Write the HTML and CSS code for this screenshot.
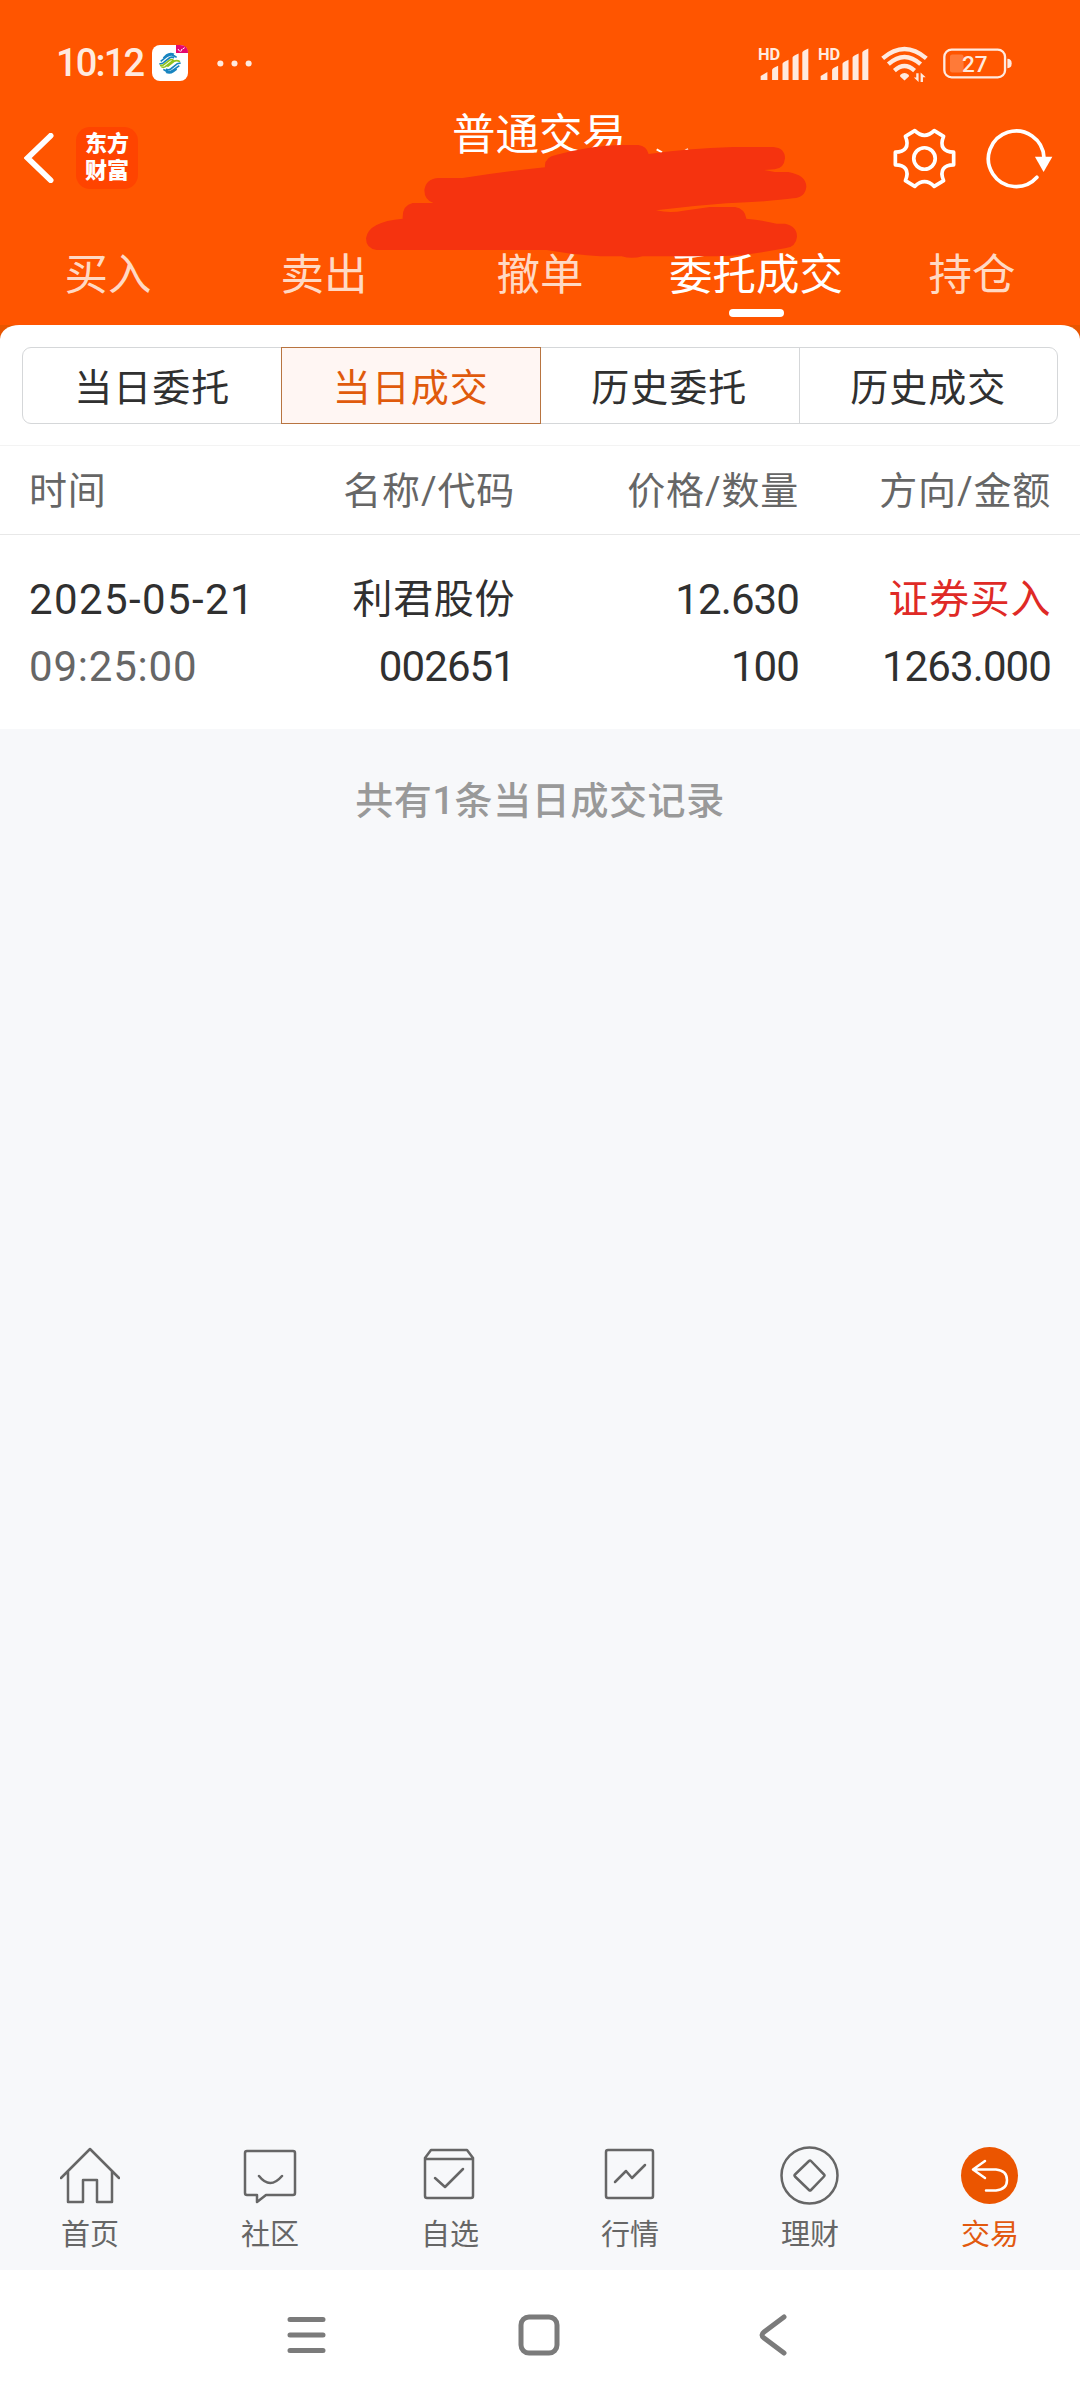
FILE: index.html
```html
<!DOCTYPE html>
<html lang="zh-CN">
<head>
    <meta charset="UTF-8">
    <meta name="viewport" content="width=device-width, initial-scale=1.0">
    <title>普通交易 - 当日成交</title>
    <link rel="stylesheet" href="styles.css">
</head>
<body>
    <header class="header">
        <div class="status-bar">
            <span class="clock">10:12</span>
            <svg class="carrier" viewBox="0 0 108 108">
                <rect width="108" height="108" rx="24" fill="#fff"/>
                <path d="M72 0h12q24 0 24 24H72z" fill="#e5086f"/>
                <path d="M78 12l5 7M86 20l4-8M92 12l6-4" stroke="#fff" stroke-width="3"/>
                <g fill="none" stroke-width="5">
                    <path d="M34 39l10-9q10-8 22-2M26 49l18-14q12-9 22-3l8 5M22 57l10-2 20-16q8-5 14 0" stroke="#1784c0"/>
                    <path d="M24 62l10-2 18-14q6-5 12 0l-24 19q-6 4-12 0M46 65l20-16q8-5 18 1" stroke="#8fc31f"/>
                    <path d="M74 72l-10 8q-10 7-22 2M82 62L64 75q-12 9-22 3l-8-5M86 54l-10 2-20 16q-8 5-14 0" stroke="#1784c0"/>
                </g>
            </svg>
            <svg class="dots" viewBox="0 0 104 20">
                <circle cx="10" cy="10" r="9"/><circle cx="52" cy="10" r="9"/><circle cx="94" cy="10" r="9"/>
            </svg>
            <div class="status-icons">
                <svg class="signal" viewBox="0 0 152 110">
                    <text x="0" y="44">HD</text>
                    <path d="M8 104v-12l20-12v24zM42 104V74q0-4 18-12v42zM73 104V56q0-4 18-12v60zM103 104V37q0-4 18-12v79zM132 104V22q0-4 18-12v94z"/>
                </svg>
                <svg class="signal" viewBox="0 0 152 110">
                    <text x="0" y="44">HD</text>
                    <path d="M8 104v-12l20-12v24zM42 104V74q0-4 18-12v42zM73 104V56q0-4 18-12v60zM103 104V37q0-4 18-12v79zM132 104V22q0-4 18-12v94z"/>
                </svg>
                <svg class="wifi" viewBox="0 0 140 110">
                    <path class="arc" d="M5 40q65-56 130 0M22 57q48-43 96 0M40 76q30-27 60 0"/>
                    <path d="M57 89q13-12 26 0v5L70 106 57 94z"/>
                    <path d="M112 84v26l-14-13h7V84zM118 110V82l15 14h-8v14z"/>
                </svg>
                <svg class="battery" viewBox="0 0 208 92">
                    <rect class="shell" x="4" y="4" width="183" height="84" rx="22"/>
                    <rect x="21" y="19" width="41" height="54" rx="7" opacity=".25"/>
                    <path d="M194 32q13 0 13 14t-13 14z"/>
                    <text x="96" y="71" text-anchor="middle">27</text>
                </svg>
            </div>
        </div>

        <div class="title-bar">
            <div class="title-left">
                <svg class="back" viewBox="0 0 90 150"><path d="M80 8L11 75l69 67"/></svg>
                <div class="logo">东方<br>财富</div>
            </div>
            <h1>普通交易</h1>
            <div class="title-right">
                <svg class="gear" viewBox="460 320 188 182">
                    <path d="M525 328Q554 356 583 328L611 345C598 376 612 392 641 392V430C612 430 598 446 611 477L583 494Q554 466 525 494L497 477C510 446 496 430 467 430V392C496 392 510 376 497 345Z"/>
                    <circle cx="554" cy="411" r="32"/>
                </svg>
                <svg class="refresh" viewBox="738 320 200 182">
                    <path class="ring" d="M890 467A83 83 0 1 1 911 408"/>
                    <path class="tip" d="M884 406h52l-26 45z"/>
                </svg>
            </div>
        </div>

        <nav class="tabs">
            <a>买入</a>
            <a>卖出</a>
            <a>撤单</a>
            <a class="active">委托成交</a>
            <a>持仓</a>
        </nav>

        <!-- 账号遮挡涂抹 -->
        <svg class="mask" viewBox="0 0 1500 750">
            <path class="tick" d="M950 178l16 9M1044 177l-10 6"/>
            <path d="M296 264H368Q490 245 615 232Q612 200 650 194Q760 166 840 165H895Q920 168 926 192Q1040 176 1180 171H1300Q1335 174 1335 205Q1332 236 1304 238L1272 240L1305 246H1345Q1399 256 1399 290Q1396 322 1360 325Q1300 334 1160 340Q1050 348 948 361Q990 370 1030 362L1110 351H1185Q1215 356 1219 386Q1270 391 1310 401H1335Q1371 408 1371 440Q1368 472 1335 475Q1210 498 1130 499H908Q875 508 845 499H780Q690 493 620 480H110Q78 476 78 445Q84 395 188 386Q186 346 218 339H280Q253 330 253 300Q258 266 296 264Z"/>
        </svg>
    </header>

    <div class="corner">
        <div class="panel-top"></div>
    </div>

    <main class="content">
        <div class="segment">
            <span>当日委托</span>
            <span class="active">当日成交</span>
            <span>历史委托</span>
            <span>历史成交</span>
        </div>

        <div class="row table-head">
            <span>时间</span>
            <span>名称/代码</span>
            <span>价格/数量</span>
            <span>方向/金额</span>
        </div>

        <div class="row record">
            <div class="cell">
                <span class="num date">2025-05-21</span>
                <span class="num time">09:25:00</span>
            </div>
            <div class="cell">
                <span>利君股份</span>
                <span class="num">002651</span>
            </div>
            <div class="cell">
                <span class="num">12.630</span>
                <span class="num">100</span>
            </div>
            <div class="cell">
                <span class="buy">证券买入</span>
                <span class="num">1263.000</span>
            </div>
        </div>
    </main>

    <p class="summary">共有1条当日成交记录</p>

    <nav class="bottom-nav">
        <a>
            <svg viewBox="0 0 60 60"><path d="M1 32L30 3l29 29M8 26v30h15V34h14v22h15V26"/></svg>
            首页
        </a>
        <a>
            <svg viewBox="0 0 60 60"><path d="M7 5h46q2 0 2 2v40q0 2-2 2H26l-9 7v-7H7q-2 0-2-2V7q0-2 2-2zM19 30q11 14 23 0"/></svg>
            社区
        </a>
        <a>
            <svg viewBox="0 0 60 60"><path d="M5 12l6-8h36l6 8v38q0 2-2 2H7q-2 0-2-2zM5 13h48M15 32l10 9 18-18"/></svg>
            自选
        </a>
        <a>
            <svg viewBox="0 0 60 60"><path d="M8 4h43q2 0 2 2v44q0 2-2 2H8q-2 0-2-2V6q0-2 2-2zM15 36l11-11 6 7 13-13"/></svg>
            行情
        </a>
        <a>
            <svg viewBox="0 0 60 60"><circle cx="29.500" cy="29.500" r="28"/><path d="M29 15L15 28.500q-1 1 0 2L29 44q1 1 2 0L44 30.500q1-1 0-2L31 15q-1-1-2 0z"/></svg>
            理财
        </a>
        <a class="active">
            <svg viewBox="0 0 60 60"><circle cx="29.500" cy="29.500" r="28.500"/><path d="M25 15L13 23.500 25 32M14 23.500h22q11 1 11 10.500t-11 10.500H26"/></svg>
            交易
        </a>
    </nav>

    <footer class="system-nav">
        <svg viewBox="0 0 60 60"><path d="M14 14.500h33M14 30h33M14 45.500h33"/></svg>
        <svg viewBox="0 0 60 60"><rect x="12" y="12" width="36" height="36" rx="8"/></svg>
        <svg viewBox="0 0 60 60"><path d="M42 12L22 27q-4 3 0 6l20 15"/></svg>
    </footer>
</body>
</html>
```
FILE: styles.css
```css
:root {
    --orange: #ff5500;
    --orange-dark: #e85500;
    --text: #303030;
    --text-gray: #666;
    --bg: #f7f8fa;
}

* {
    margin: 0;
    padding: 0;
    box-sizing: border-box;
}

body {
    width: 1080px;
    height: 2400px;
    display: flex;
    flex-direction: column;
    background: var(--bg);
    color: var(--text);
    font-family: Roboto, 'Noto Sans CJK SC', sans-serif;
    font-size: 38px;
    overflow: hidden;
}

.header {
    position: relative;
    height: 325px;
    background: var(--orange);
    color: #fff;
}

/* 状态栏 */
.status-bar {
    display: flex;
    align-items: center;
    height: 100px;
    padding: 26px 68px 0 56px;
}

.clock {
    width: 96px;
    font-size: 38px;
    font-weight: 500;
    letter-spacing: -1.8px;
    color: #ffeadf;
}

.carrier {
    width: 36px;
    height: 36px;
}

.dots {
    width: 35px;
    height: 7px;
    margin-left: 29px;
    fill: #ffeadf;
}

.status-icons {
    display: flex;
    align-items: center;
    margin-left: auto;
    fill: #ffeadf;
}

.signal {
    width: 51px;
    height: 37px;
    margin-right: 9px;
}

.signal text {
    font-size: 49px;
    font-weight: 700;
}

.wifi {
    width: 47px;
    height: 37px;
    margin: 0 15px 0 3px;
}

.wifi .arc {
    fill: none;
    stroke: #ffeadf;
    stroke-width: 13;
}

.battery {
    width: 69px;
    height: 31px;
}

.battery .shell {
    fill: none;
    stroke: #ffeadf;
    stroke-width: 7;
}

.battery text {
    font-size: 68px;
    font-weight: 500;
}

/* 标题栏 */
.title-bar {
    display: grid;
    grid-template-columns: 1fr auto 1fr;
    align-items: center;
    height: 116px;
    padding: 0 27px 0 24px;
}

.title-left,
.title-right {
    display: flex;
    align-items: center;
}

.title-right {
    justify-content: flex-end;
    gap: 30px;
}

.back {
    width: 30px;
    height: 50px;
    fill: none;
    stroke: #fff;
    stroke-width: 17;
    stroke-linecap: round;
}

.logo {
    width: 62px;
    height: 62px;
    margin-left: 22px;
    padding-top: 3px;
    border-radius: 14px;
    background: #ff4400;
    font-size: 22px;
    font-weight: 900;
    line-height: 27px;
    text-align: center;
}

h1 {
    align-self: flex-start;
    padding: 2px 0 0 1px;
    font-size: 43.500px;
    font-weight: 400;
    line-height: 68px;
}

.gear {
    width: 63px;
    height: 61px;
}

.refresh {
    width: 67px;
    height: 61px;
}

.gear,
.ring {
    fill: none;
    stroke: #fff;
    stroke-width: 11;
    stroke-linejoin: round;
    stroke-linecap: round;
}

.tip {
    fill: #fff;
}

.tabs {
    display: grid;
    grid-template-columns: repeat(5, 1fr);
    height: 108px;
}

.tabs a {
    display: flex;
    flex-direction: column;
    align-items: center;
    padding-top: 28px;
    font-size: 43.500px;
    line-height: 64px;
    color: #ffd9c4;
}

.tabs .active {
    color: #fff;
}

.tabs .active::after {
    content: "";
    width: 55px;
    height: 8px;
    margin-top: 1px;
    border-radius: 4px;
    background: #fff;
}

.mask {
    position: absolute;
    left: 340px;
    top: 90px;
    width: 500px;
    height: 250px;
    fill: #f5330f;
}

.mask .tick {
    fill: none;
    stroke: #fff;
    stroke-width: 6;
}

/* 圆角面板 */
.corner {
    height: 14px;
    background: var(--orange-dark);
}

.panel-top {
    height: 14px;
    border-radius: 22px 22px 0 0 / 16px 16px 0 0;
    background: #fff;
}

.content {
    background: #fff;
}

.segment {
    display: grid;
    grid-template-columns: repeat(4, 1fr);
    height: 77px;
    margin: 8px 22px 21px;
    border: 1px solid #d5d7d9;
    border-radius: 9px;
}

.segment span {
    display: flex;
    align-items: center;
    justify-content: center;
    padding-bottom: 3px;
    letter-spacing: 1px;
}

.segment span + span {
    border-left: 1px solid #d5d7d9;
}

.segment .active {
    margin: -1px;
    border: 1px solid #b87440 !important;
    background: #fff6f3;
    color: #e05a0c;
}

.segment .active + span {
    border-left: none;
}

.row {
    display: grid;
    grid-template-columns: 250px 236px 284px 1fr;
    padding: 0 29px;
    text-align: right;
}

.row > :first-child {
    text-align: left;
}

.table-head {
    height: 90px;
    border-top: 1px solid #f3f3f3;
    border-bottom: 1px solid #e8e8e8;
    line-height: 91px;
    letter-spacing: 0.8px;
    color: var(--text-gray);
}

.record {
    height: 194px;
    padding-top: 31px;
}

.cell {
    display: flex;
    flex-direction: column;
    font-size: 40px;
    line-height: 67px;
    letter-spacing: 0.6px;
}

.num {
    font-size: 42px;
    letter-spacing: -0.9px;
}

.date {
    letter-spacing: 1.4px;
}

.time {
    letter-spacing: 0.8px;
    color: var(--text-gray);
}

.buy {
    color: #df2a26;
}

.summary {
    margin-top: 44px;
    font-weight: 500;
    line-height: 56px;
    letter-spacing: 0.6px;
    text-align: center;
    color: #999;
}

/* 底部导航 */
.bottom-nav {
    display: grid;
    grid-template-columns: repeat(6, 1fr);
    height: 124px;
    margin-top: auto;
}

.bottom-nav a {
    display: flex;
    flex-direction: column;
    align-items: center;
    font-size: 29px;
    line-height: 59px;
    color: var(--text-gray);
}

.bottom-nav svg {
    width: 60px;
    height: 60px;
    fill: none;
    stroke: var(--text-gray);
    stroke-width: 2.500;
    stroke-linecap: round;
    stroke-linejoin: round;
}

.bottom-nav .active {
    color: #e2590f;
}

.bottom-nav .active svg {
    stroke: #fff;
}

.bottom-nav .active circle {
    fill: #eb5500;
    stroke: none;
}

.system-nav {
    display: flex;
    align-items: center;
    justify-content: center;
    gap: 173px;
    height: 130px;
    padding-right: 2px;
    background: #fff;
}

.system-nav svg {
    width: 60px;
    height: 60px;
    fill: none;
    stroke: #7b7b7b;
    stroke-width: 5;
    stroke-linecap: round;
}
```
